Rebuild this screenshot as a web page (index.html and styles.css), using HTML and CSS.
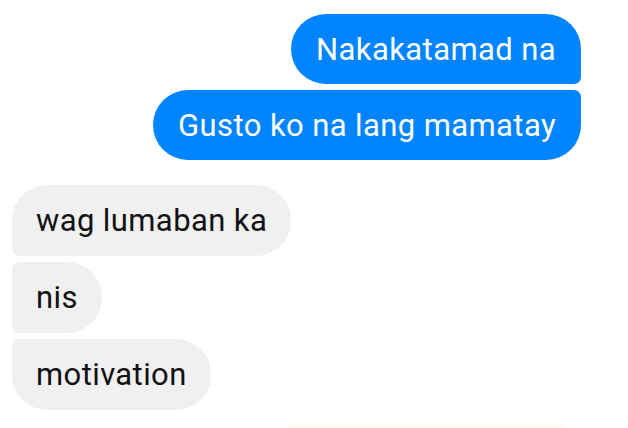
FILE: index.html
```html
<!DOCTYPE html>
<html>
<head>
<meta charset="utf-8">
<link rel="stylesheet" href="styles.css">
</head>
<body>
<div class="chat">
  <div class="group sent">
    <div class="bubble first">Nakakatamad na</div>
    <div class="bubble last">Gusto ko na lang mamatay</div>
  </div>
  <div class="group received">
    <div class="bubble first">wag lumaban ka</div>
    <div class="bubble mid">nis</div>
    <div class="bubble last">motivation</div>
  </div>
</div>
<div class="glow"></div>
</body>
</html>
```
FILE: styles.css
```css
html, body {
  margin: 0;
  padding: 0;
  background: #ffffff;
  width: 628px;
  height: 428px;
  overflow: hidden;
}
body {
  font-family: Roboto, "Noto Sans", sans-serif;
  position: relative;
}
.chat {
  display: flex;
  flex-direction: column;
  gap: 25px;
  padding: 14px 47px 0 12px;
}
.group {
  display: flex;
  flex-direction: column;
  gap: 6px;
}
.sent {
  align-items: flex-end;
}
.received {
  align-items: flex-start;
}
.bubble {
  height: 70px;
  box-sizing: border-box;
  padding: 0 25px;
  display: flex;
  align-items: center;
  font-size: 31px;
  letter-spacing: 0.4px;
  white-space: nowrap;
  border-radius: 35px;
}
.sent .bubble {
  background: #0084ff;
  color: #ffffff;
}
.sent .first {
  border-bottom-right-radius: 7px;
}
.sent .last {
  border-top-right-radius: 7px;
}
.received .bubble {
  background: #f0f0f0;
  color: #111111;
  padding: 0 24px;
  height: 71px;
}
.received .first {
  border-bottom-left-radius: 7px;
}
.received .mid {
  border-top-left-radius: 7px;
  border-bottom-left-radius: 7px;
}
.received .last {
  border-top-left-radius: 7px;
}
.glow {
  position: absolute;
  left: 287px;
  right: 65px;
  bottom: 0;
  height: 5px;
  background: linear-gradient(to bottom, rgba(255,250,225,0), rgba(255,248,220,0.6));
}
```
